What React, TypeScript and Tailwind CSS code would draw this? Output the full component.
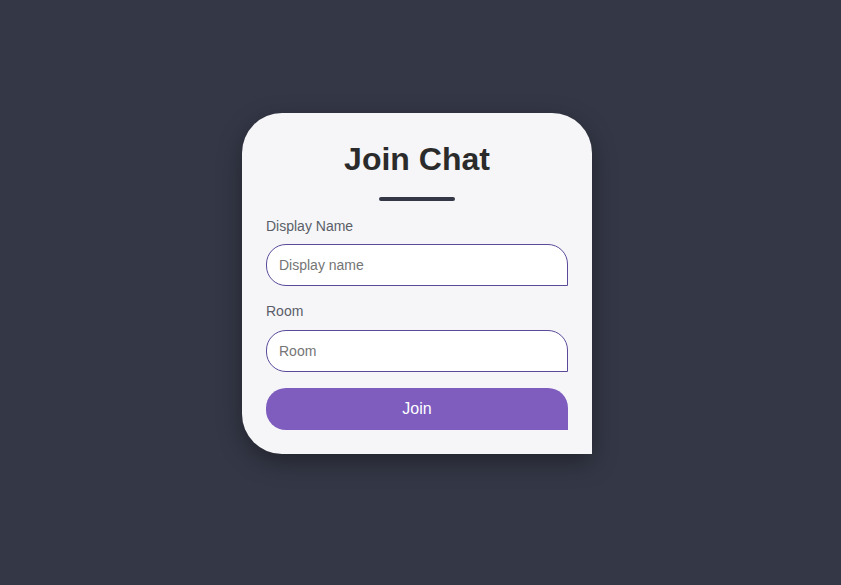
export default function App() {
  return (
    <div
      className="w-[841px] h-[585px] bg-[#343746] flex items-start justify-center pt-[113px]"
      style={{ fontFamily: '"Liberation Sans", Arial, sans-serif' }}
    >
      <div className="mr-[7px] w-[350px] bg-[#f6f6f8] rounded-tl-[40px] rounded-tr-[40px] rounded-bl-[40px] px-6 pt-6 pb-6 shadow-[0_8px_24px_rgba(0,0,0,0.35)]">
        <h1 className="text-[32px] leading-[44px] font-bold text-[#2b2b2b] text-center">Join Chat</h1>
        <div className="mx-auto mt-4 w-[76px] h-1 rounded-full bg-[#343746]" />
        <label className="block mt-[15px] text-sm leading-5 text-[#5a5e68]">Display Name</label>
        <input
          placeholder="Display name"
          className="mt-2 block w-full h-[42px] bg-white border border-[#5b4a9a] rounded-tl-[20px] rounded-tr-[20px] rounded-bl-[20px] px-3 text-sm text-[#333] placeholder:text-[#757575] outline-none"
        />
        <label className="block mt-[15px] text-sm leading-5 text-[#5a5e68]">Room</label>
        <input
          placeholder="Room"
          className="mt-[9px] block w-full h-[42px] bg-white border border-[#5b4a9a] rounded-tl-[20px] rounded-tr-[20px] rounded-bl-[20px] px-3 text-sm text-[#333] placeholder:text-[#757575] outline-none"
        />
        <button className="mt-4 block w-full h-[42px] bg-[#7e5dbf] text-white text-base rounded-tl-[20px] rounded-tr-[20px] rounded-bl-[20px]">
          Join
        </button>
      </div>
    </div>
  );
}
